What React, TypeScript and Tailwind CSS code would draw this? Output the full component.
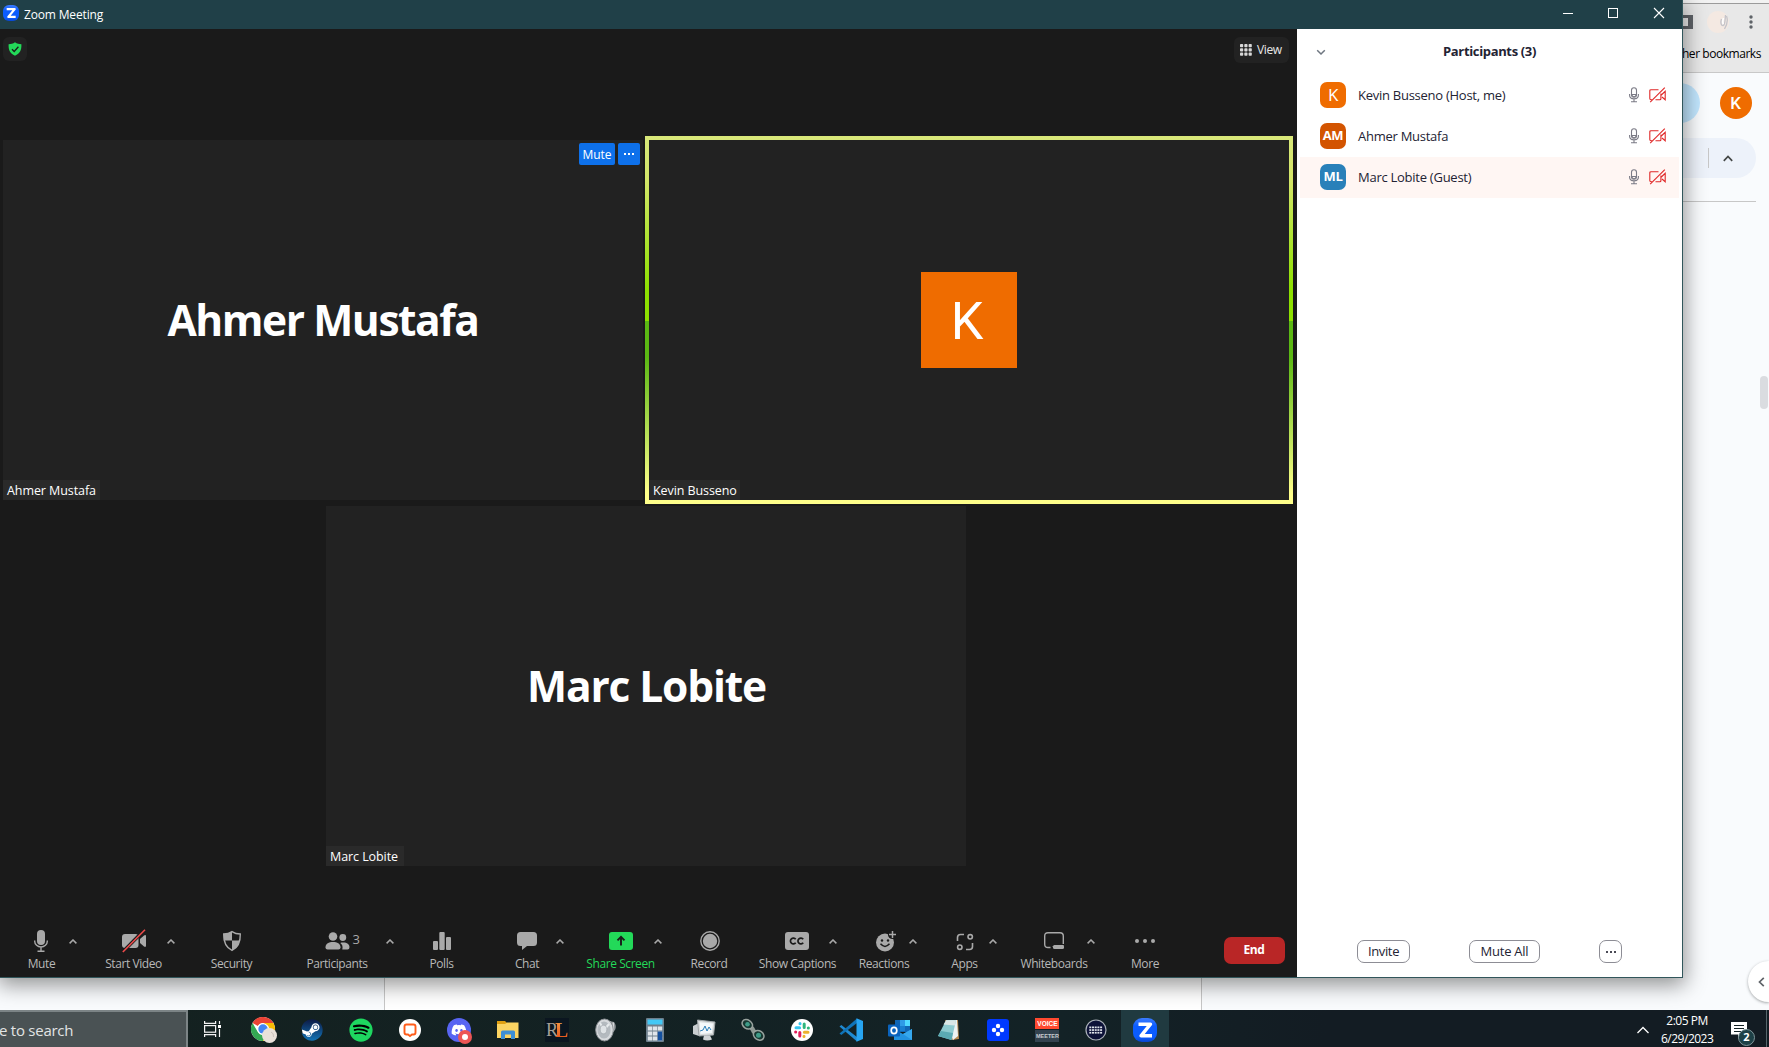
import React from "react";
import { FaSpotify, FaSteam, FaDiscord } from "react-icons/fa";

const G = "#a9a9a9";

/* ---------- meeting toolbar icons ---------- */

const MicIcon = () => (
  <svg width="16" height="24" viewBox="0 0 16 24" fill="none" stroke={G} strokeWidth="1.400" className="mr-px">
    <rect x="4" y="1" width="8" height="15" rx="4" fill={G} stroke="none" />
    <path d="M1.700 11.500v.8a6.300 5.700 0 0 0 12.600 0v-.8M8 18v4M4.500 22.200h7" />
  </svg>
);
const VideoOffIcon = () => (
  <svg width="26" height="24" viewBox="0 0 26 24">
    <rect x="1" y="5" width="16.500" height="14" rx="3" fill={G} />
    <path d="M19 10l4-3.600q2-1 2 .8v9.600q0 1.800-2 .8l-4-3.600z" fill={G} />
    <path d="M1.500 23.200L23.500.8" stroke="#1a1a1a" strokeWidth="3.400" />
    <path d="M1.800 23L24 .8" stroke="#ef4b4b" strokeWidth="1.600" />
  </svg>
);
const SecurityIcon = () => (
  <svg width="20" height="22" viewBox="0 0 20 22">
    <path d="M10 1.600C7.500 3.300 4.500 4 1.700 4c-.2 7.500 1.800 13.300 8.300 16.400C16.500 17.300 18.500 11.500 18.300 4 15.500 4 12.500 3.300 10 1.600z" fill="none" stroke={G} strokeWidth="1.400" />
    <path d="M10 1.600C7.500 3.300 4.500 4 1.700 4c0 2.500.1 4.600.6 6.500H10zM10 10.500h7.700c-.9 4.500-3.200 7.900-7.700 9.900z" fill={G} />
  </svg>
);
const PeopleIcon = () => (
  <svg width="26" height="20" viewBox="0 0 26 20" fill={G} className="mr-px">
    <circle cx="9" cy="5.500" r="4.300" />
    <path d="M1.500 16.500c0-4 3.300-5.500 7.500-5.500s7.500 1.500 7.500 5.500q0 2-2 2h-11q-2 0-2-2z" />
    <circle cx="18.800" cy="6.500" r="3.400" />
    <path d="M17.500 11.600c4.700-.6 8 1 8 4.700q0 2.200-2 2.200h-5.200c.8-3-.1-5.200-2-6.500z" />
  </svg>
);
const PollsIcon = () => (
  <svg width="18" height="18" viewBox="0 0 18 18" fill={G}>
    <rect x="0" y="9" width="5" height="9" rx="1" />
    <rect x="6.300" y="0" width="5.400" height="18" rx="1" />
    <rect x="13" y="5" width="5" height="13" rx="1" />
  </svg>
);
const ChatIcon = () => (
  <svg width="20" height="18" viewBox="0 0 20 18" fill={G}>
    <path d="M3.500 0h13Q20 0 20 3.500v7q0 3.500-3.500 3.500H10l-5 4v-4H3.500Q0 14 0 10.500v-7Q0 0 3.500 0z" />
  </svg>
);
const ShareIcon = () => (
  <svg width="24" height="18" viewBox="0 0 24 18">
    <rect width="24" height="18" rx="3" fill="#23d959" />
    <path d="M12 13.500V5M8.500 8.300L12 4.800l3.500 3.500" fill="none" stroke="#1a1a1a" strokeWidth="1.900" />
  </svg>
);
const RecordIcon = () => (
  <svg width="20" height="20" viewBox="0 0 20 20" className="ml-[2px]">
    <circle cx="10" cy="10" r="9.200" fill="none" stroke={G} strokeWidth="1.400" />
    <circle cx="10" cy="10" r="7.200" fill={G} />
  </svg>
);
const CaptionsIcon = () => (
  <svg width="24" height="18" viewBox="0 0 24 18" className="mr-px">
    <rect width="24" height="18" rx="3" fill={G} />
    <path d="M10.700 7.300a2.900 2.900 0 1 0 0 3.400M18.200 7.300a2.900 2.900 0 1 0 0 3.400" fill="none" stroke="#1a1a1a" strokeWidth="1.700" />
  </svg>
);
const ReactionsIcon = () => (
  <svg width="22" height="22" viewBox="0 0 22 22" className="ml-[3px]">
    <circle cx="10" cy="12.500" r="9" fill={G} />
    <circle cx="17.500" cy="4.500" r="4.600" fill="#1a1a1a" />
    <path d="M17.500 1v7M14 4.500h7" stroke={G} strokeWidth="1.500" />
    <circle cx="7" cy="10.500" r="1.200" fill="#1a1a1a" />
    <circle cx="13" cy="10.500" r="1.200" fill="#1a1a1a" />
    <path d="M5.500 13.800q4.500 5.200 9 0" fill="none" stroke="#1a1a1a" strokeWidth="1.500" />
  </svg>
);
const AppsIcon = () => (
  <svg width="18" height="18" viewBox="0 0 18 18" fill="none" stroke={G} strokeWidth="1.600" className="mt-[2px]">
    <path d="M1.500 8V4.500q0-3 3-3H8M16.500 10v3.500q0 3-3 3H10" />
    <circle cx="14.200" cy="3.800" r="2.200" />
    <circle cx="3.800" cy="14.200" r="2.200" />
  </svg>
);
const WhiteboardIcon = () => (
  <svg width="20" height="18" viewBox="0 0 20 18">
    <path d="M6.500 15.500H4Q.7 15.500.7 12.300V4Q.7.700 4 .700h12Q19.300.700 19.300 4v8" fill="none" stroke={G} strokeWidth="1.400" />
    <path d="M11.500 13H19.500v3H11.500L8 14.800z" fill={G} />
    <rect x="9" y="13" width="11" height="4" rx="1.500" fill={G} />
  </svg>
);
const MoreIcon = () => (
  <svg width="20" height="4" viewBox="0 0 20 4" fill={G}>
    <circle cx="2" cy="2" r="2" />
    <circle cx="10" cy="2" r="2" />
    <circle cx="18" cy="2" r="2" />
  </svg>
);
const Caret = () => (
  <svg width="8" height="5" viewBox="0 0 8 5" fill="none" stroke={G} strokeWidth="1.500">
    <path d="M.6 4.400L4 1l3.400 3.400" />
  </svg>
);

type Tool = { label: string; icon: React.ReactNode; box: string; caret?: boolean; green?: boolean; count?: string };

const tools: Tool[] = [
  { label: "Mute", icon: <MicIcon />, box: "ml-[18px] w-[47px]", caret: true },
  { label: "Start Video", icon: <VideoOffIcon />, box: "ml-[23px] w-[59px]", caret: true },
  { label: "Security", icon: <SecurityIcon />, box: "ml-[30px] w-[45px]" },
  { label: "Participants", icon: <PeopleIcon />, box: "ml-[38px] w-[90px]", caret: true, count: "3" },
  { label: "Polls", icon: <PollsIcon />, box: "ml-[30px] w-[27px]" },
  { label: "Chat", icon: <ChatIcon />, box: "ml-[47px] w-[50px]", caret: true },
  { label: "Share Screen", icon: <ShareIcon />, box: "ml-[23px] w-[59px]", caret: true, green: true },
  { label: "Record", icon: <RecordIcon />, box: "ml-[24px] w-[38px]" },
  { label: "Show Captions", icon: <CaptionsIcon />, box: "ml-[42px] w-[55px]", caret: true },
  { label: "Reactions", icon: <ReactionsIcon />, box: "ml-[22px] w-[42px]", caret: true },
  { label: "Apps", icon: <AppsIcon />, box: "ml-[23px] w-[41px]", caret: true },
  { label: "Whiteboards", icon: <WhiteboardIcon />, box: "ml-[24px] w-[58px]", caret: true },
  { label: "More", icon: <MoreIcon />, box: "ml-[31px] w-[30px]" },
];

function ToolButton({ t }: { t: Tool }) {
  return (
    <div className="flex shrink-0">
      <div className={`flex flex-col items-center ${t.box}`}>
        <div className="relative flex h-[26px] items-center justify-center">
          {t.icon}
          {t.count && <span className="absolute top-[2px] left-[29px] text-[13px] leading-[18px] text-[#a9a9a9]">{t.count}</span>}
        </div>
        <span className={`mt-px text-[12px] leading-[18px] font-medium tracking-[-0.42px] whitespace-nowrap ${t.green ? "text-[#23d959]" : "text-[#b8b8b8]"}`}>{t.label}</span>
      </div>
      {t.caret && (
        <div className="flex h-[26px] w-4 items-center justify-center">
          <Caret />
        </div>
      )}
    </div>
  );
}

function NameTag({ name, width }: { name: string; width: string }) {
  return <div className={`flex h-5 items-center self-start bg-[#2a2a2a] pt-[2px] pl-1 text-[12.5px] leading-5 tracking-[-0.08px] whitespace-nowrap text-white ${width}`}>{name}</div>;
}

/* ---------- participants panel ---------- */

const people = [
  { initials: "K", name: "Kevin Busseno (Host, me)", bg: "bg-[#ef6c00]", font: "text-[17px] font-normal", row: "" },
  { initials: "AM", name: "Ahmer Mustafa", bg: "bg-[#d35400]", font: "text-[13px] font-bold", row: "" },
  { initials: "ML", name: "Marc Lobite (Guest)", bg: "bg-[#2980b9]", font: "text-[13px] font-bold", row: "bg-[#fff6f3]" },
];

const SmallMic = () => (
  <svg width="10" height="16" viewBox="0 0 10 16" fill="none" stroke="#7b7b86" strokeWidth="1.100">
    <rect x="2.500" y=".8" width="5" height="9.400" rx="2.500" />
    <path d="M3 7.500h4v1q-2 2.500-4 0zM.6 7v1.200q0 3.600 4.400 3.600t4.400-3.600V7M5 12v2.600M2 14.800h6" />
  </svg>
);
const SmallVideoOff = () => (
  <svg width="17" height="16" viewBox="0 0 17 16" fill="none" stroke="#e02828" strokeWidth="1.100">
    <path d="M9.500 2.700H2q-1.200 0-1.200 1.200v7.700q0 1.200 1.200 1.200h1M6.500 12.800h4.400q1 0 1-1V6.500M12.300 8l3.900-3.700v8.400L13 10" />
    <path d="M1.200 15.200L15.800.6" />
  </svg>
);

function ParticipantsPanel() {
  return (
    <section className="flex w-[385px] flex-col bg-white text-[#232333]">
      <header className="flex h-[46px] items-center pl-[19px]">
        <svg width="10" height="7" viewBox="0 0 10 7" fill="none" stroke="#6e7680" strokeWidth="1.500">
          <path d="M1.200 1.200L5 5l3.800-3.800" />
        </svg>
        <h1 className="flex-1 pr-[29px] pb-[1px] text-center text-[13px] font-bold tracking-[-0.35px]">Participants (3)</h1>
      </header>
      <ul className="px-[3px]">
        {people.map((p) => (
          <li key={p.name} className={`flex h-[41px] items-center pr-[13px] pb-px pl-5 ${p.row}`}>
            <span className={`flex size-[26px] items-center justify-center rounded-[7px] tracking-[-0.3px] text-white ${p.bg} ${p.font}`}>{p.initials}</span>
            <span className="ml-3 flex-1 pt-px text-[13px] tracking-[-0.26px]">{p.name}</span>
            <SmallMic />
            <span className="ml-[10px]">
              <SmallVideoOff />
            </span>
          </li>
        ))}
      </ul>
      <footer className="mt-auto mb-[14px] flex pl-[60px] text-[13px] leading-[21px]">
        <button className="h-[23px] w-[53px] rounded-[7px] border border-[#8d8d95] tracking-[-0.35px]">Invite</button>
        <button className="ml-[59px] h-[23px] w-[71px] rounded-[7px] border border-[#8d8d95] tracking-[-0.25px]">Mute All</button>
        <button className="ml-[59px] flex h-[23px] w-[23px] items-center justify-center gap-[2px] rounded-[7px] border border-[#8d8d95]">
          <i className="size-[2px] bg-[#4a4a55]" />
          <i className="size-[2px] bg-[#4a4a55]" />
          <i className="size-[2px] bg-[#4a4a55]" />
        </button>
      </footer>
    </section>
  );
}

const ZoomLogo = ({ size }: { size: number }) => (
  <svg width={size} height={size} viewBox="0 0 24 24">
    <defs>
      <linearGradient id="zl" x1="0" y1="0" x2="0" y2="1">
        <stop offset="0" stopColor="#3b7cff" />
        <stop offset=".35" stopColor="#0b5cff" />
        <stop offset=".8" stopColor="#0b5cff" />
        <stop offset="1" stopColor="#0846d0" />
      </linearGradient>
    </defs>
    <rect width="24" height="24" rx="9" fill="url(#zl)" />
    <path d="M5.500 6.200h12L8 17.800h11" fill="none" stroke="#fff" strokeWidth="3.400" strokeLinejoin="round" />
  </svg>
);

function MeetingWindow() {
  return (
    <div className="absolute top-0 left-0 flex h-[978px] w-[1683px] flex-col border-r border-b border-[#31565b] bg-[#1a1a1a] shadow-[0_5px_20px_2px_rgba(0,0,0,0.42)]">
      <div className="flex h-[29px] shrink-0 items-center bg-[#204048] pl-[3px] text-white">
        <div className="mb-[3px]">
          <ZoomLogo size={16} />
        </div>
        <span className="ml-[5px] flex-1 pt-px text-[12px] leading-4 tracking-[-0.16px]">Zoom Meeting</span>
        <svg className="mb-[3px] mr-[17px]" width="102" height="12" viewBox="0 0 102 12" fill="none" stroke="#fff">
          <path d="M0 6.500h10" />
          <rect x="45.500" y="1.500" width="9" height="9" />
          <path d="M91 1l10 10M101 1L91 11" strokeWidth="1.100" />
        </svg>
      </div>
      <div className="flex min-h-0 flex-1">
        <main className="flex w-[1297px] flex-col bg-[#1a1a1a]">
          <div className="flex h-[107px] items-start justify-between pt-2 pr-2 pl-[3px]">
            <div className="flex size-6 items-center justify-center rounded-[6px] bg-[#222]">
              <svg width="14" height="14" viewBox="0 0 14 14">
                <path d="M7 .3C5 1.800 3 2.200.6 2.300.400 8 1.800 11.500 7 13.800 12.200 11.500 13.600 8 13.400 2.300 11 2.200 9 1.800 7 .3z" fill="#23d959" />
                <path d="M4 7.300l2.200 2.200 4.200-4.700" fill="none" stroke="#1a1a1a" strokeWidth="1.300" />
              </svg>
            </div>
            <div className="flex h-[26px] w-[55px] items-center gap-[5px] rounded-[6px] bg-[#222] pb-px pl-[6px] text-[12px] tracking-[-0.4px] text-[#e8e8e8]">
              <svg width="12" height="12" viewBox="0 0 12 12" fill="#d8d8d8" className="shrink-0">
                {[0, 4.300, 8.600].map((y) => [0, 4.300, 8.600].map((x) => <rect key={`${x}-${y}`} x={x} y={y} width="3.200" height="3.200" rx=".8" />))}
              </svg>
              View
            </div>
          </div>
          <div className="flex pl-[3px]">
            <div className="mt-1 flex h-[360px] w-[640px] flex-col bg-[#222]">
              <div className="flex h-0 justify-end gap-[3px] pr-[3px]">
                <button className="mt-[3px] h-[22px] w-9 shrink-0 rounded-[2px] bg-[#0e71eb] text-[12px] leading-[21px] text-white">Mute</button>
                <button className="mt-[3px] flex h-[22px] w-[22px] shrink-0 items-center justify-center gap-[2px] rounded-[2px] bg-[#0e71eb]">
                  <i className="size-[2px] bg-white" />
                  <i className="size-[2px] bg-white" />
                  <i className="size-[2px] bg-white" />
                </button>
              </div>
              <div className="flex flex-1 items-center justify-center pt-[19px] text-[42.5px] font-bold tracking-[-1.430px] text-white">Ahmer Mustafa</div>
              <NameTag name="Ahmer Mustafa" width="w-[97px]" />
            </div>
            <div className="ml-[2px] h-[368px] w-[648px] bg-[linear-gradient(180deg,#d9e87a_0%,#d3e668_12%,#8de000_42%,#8de000_50.200%,#5bb813_50.400%,#5bb813_60%,#ffff8a_97%,#ffff8a_100%)] p-1">
              <div className="flex h-full flex-col bg-[#222]">
                <div className="flex flex-1 items-center justify-center pt-5">
                  <div className="flex size-24 items-center justify-center bg-[#ef6c00] pt-[3px] pr-[4px] font-[Roboto] text-[52px] text-white">K</div>
                </div>
                <NameTag name="Kevin Busseno" width="w-[91px]" />
              </div>
            </div>
          </div>
          <div className="mt-[2px] ml-[326px] flex h-[360px] w-[640px] flex-col bg-[#222]">
            <div className="flex flex-1 items-center justify-center pt-[19px] pl-px text-[42.5px] font-bold tracking-[-1.150px] text-white">Marc Lobite</div>
            <NameTag name="Marc Lobite" width="w-[78px]" />
          </div>
          <div className="mt-auto flex h-[49px]">
            {tools.map((t) => (
              <ToolButton key={t.label} t={t} />
            ))}
            <button className="mt-[9px] ml-[64px] h-[27px] w-[61px] rounded-[7px] bg-[#b92626] pr-px pb-[2px] text-[12px] font-bold tracking-[-0.4px] text-white">End</button>
          </div>
        </main>
        <ParticipantsPanel />
      </div>
    </div>
  );
}

/* ---------- browser page behind the meeting ---------- */

function BrowserPage() {
  return (
    <div className="flex h-[1010px] flex-col bg-[#f9fbfd]">
      <div className="h-1 border-b border-[#9b9b9b] bg-[#f2f2f2]" />
      <div className="h-[69px] border-b border-[#c8c8c8] bg-[#e8e8e8]">
        <div className="flex h-[36px] items-center justify-end pr-[16px]">
          <div className="mr-[14px] h-[14px] w-[18px] border-[3px] border-r-[5px] border-[#5f6368] bg-[#ececec]" />
          <svg width="22" height="22" viewBox="0 0 22 22" className="mr-[20px]">
            <circle cx="11" cy="11" r="11" fill="#f4e9e2" />
            <path d="M14.500 8c-1.500 4 0 7 1.800 6.500 2-1 1.700-6 2.200-10.500M19.500 5c1.500 4 .5 9-2 13" stroke="#c4c4ca" strokeWidth="1.300" fill="none" />
            <path d="M16.500 7c-1 3-1 5 0 6" stroke="#fff" strokeWidth="1.600" fill="none" />
          </svg>
          <svg width="4" height="14" viewBox="0 0 4 14" fill="#5f6368">
            <circle cx="2" cy="2" r="1.700" />
            <circle cx="2" cy="7" r="1.700" />
            <circle cx="2" cy="12" r="1.700" />
          </svg>
        </div>
        <div className="pr-[8px] text-right text-[12px] leading-[28px] tracking-[-0.45px] text-black">Other bookmarks</div>
      </div>
      <div className="mt-[10px] flex h-10 items-center justify-end pr-[17px]">
        <div className="h-10 w-[110px] rounded-full bg-[#c2e7ff]" />
        <div className="ml-5 flex size-8 items-center justify-center rounded-full bg-[#ef6c00] pt-px pr-px font-[Roboto] text-[17px] font-medium text-white">K</div>
      </div>
      <div className="mt-[15px] mr-[13px] flex h-10 items-center justify-end rounded-full bg-[#edf2fa] pr-[23px]">
        <div className="mr-[14px] h-5 w-px bg-[#c7c7c7]" />
        <svg width="10" height="7" viewBox="0 0 10 7" fill="none" stroke="#444746" strokeWidth="1.700">
          <path d="M.8 5.800L5 1.500l4.200 4.300" />
        </svg>
      </div>
      <div className="mt-[23px] mr-[13px] h-px bg-[#c7c7c7]" />
      <div className="mt-[174px] mr-[1px] h-[33px] w-2 self-end rounded-full bg-[#dadce0]" />
      <div className="flex flex-1 items-end">
        <div className="ml-[384px] h-[400px] w-[818px] border-x border-[#c7c7c7] bg-white" />
        <div className="mb-[8px] ml-auto flex h-[41px] w-[21px] items-center justify-end rounded-l-full bg-white pr-[4px] shadow-[0_1px_3px_rgba(60,64,67,0.45)]">
          <svg width="7" height="10" viewBox="0 0 7 10" fill="none" stroke="#5f6368" strokeWidth="1.700">
            <path d="M5.800.8L1.500 5l4.300 4.200" />
          </svg>
        </div>
      </div>
    </div>
  );
}

/* ---------- Windows taskbar ---------- */

const apps: { id: string; icon: React.ReactNode }[] = [
  {
    id: "chrome",
    icon: (
      <svg width="26" height="26" viewBox="0 0 26 26" className="ml-px">
        <circle cx="12" cy="12" r="12" fill="#fff" />
        <path d="M1.600 6A12 12 0 0 1 22.400 6H12a6 6 0 0 0-5.200 3z" fill="#ea4335" />
        <path d="M1.600 6a12 12 0 0 0 10.400 18l5.200-9A6 6 0 0 1 6.800 15z" fill="#34a853" />
        <path d="M22.400 6A12 12 0 0 1 12 24l5.200-9A6 6 0 0 0 17.200 9L12 6z" fill="#fbbc04" />
        <circle cx="12" cy="12" r="5.800" fill="#fff" />
        <circle cx="12" cy="12" r="4.700" fill="#4285f4" />
        <circle cx="18.500" cy="18.500" r="7.500" fill="#e9e1da" />
        <path d="M20 15q3 1 2.500 5" stroke="#cbc2bd" fill="none" />
      </svg>
    ),
  },
  {
    id: "steam",
    icon: (
      <div className="flex size-[20px] items-center justify-center rounded-full bg-white">
        <svg width="0" height="0">
          <linearGradient id="stm" x1="0" y1="0" x2="0" y2="1">
            <stop offset="0" stopColor="#0d1a45" />
            <stop offset="1" stopColor="#1273b5" />
          </linearGradient>
        </svg>
        <FaSteam size={22} className="shrink-0" style={{ fill: "url(#stm)" }} />
      </div>
    ),
  },
  {
    id: "spotify",
    icon: (
      <div className="flex size-[22px] items-center justify-center rounded-full bg-black">
        <FaSpotify size={24} className="shrink-0 text-[#1ed760]" />
      </div>
    ),
  },
  {
    id: "chat-agent",
    icon: (
      <svg width="22" height="22" viewBox="0 0 22 22">
        <circle cx="11" cy="11" r="11" fill="#fff" />
        <path d="M7.500 5.500h7q2 0 2 2v6q0 2-2 2H13l-2 1.500-2-1.500H7.500q-2 0-2-2v-6q0-2 2-2z" fill="none" stroke="#ff5c1a" strokeWidth="1.900" />
      </svg>
    ),
  },
  {
    id: "discord",
    icon: (
      <div className="relative flex size-6 items-center justify-center rounded-full bg-[#5865f2]">
        <FaDiscord size={16} className="text-white" />
        <span className="absolute -right-px -bottom-[2px] flex size-[14px] items-center justify-center rounded-full bg-[#ed5555]">
          <i className="size-[6px] rounded-full bg-white" />
        </span>
      </div>
    ),
  },
  {
    id: "explorer",
    icon: (
      <svg width="22" height="20" viewBox="0 0 22 20">
        <path d="M0 1h8l2 2v4H0z" fill="#e0a011" />
        <path d="M0 4h8l2-1.500h11.500V18H0z" fill="#fcd462" />
        <path d="M4 19v-7q0-1.500 1.500-1.500h11Q18 10.500 18 12v7h-4v-4.500H8V19z" fill="#3d8fd6" />
      </svg>
    ),
  },
  {
    id: "rl",
    icon: (
      <div className="flex h-6 w-6 items-center justify-center bg-[#0b1620] font-['Liberation_Serif'] text-[18px] leading-6 tracking-[-3px]">
        <span className="text-[#a59f97]">R</span>
        <span className="bg-linear-to-b from-[#f5a04a] to-[#e4430c] bg-clip-text pr-[3px] text-[20px] font-bold text-transparent">L</span>
      </div>
    ),
  },
  {
    id: "speaker",
    icon: (
      <svg width="22" height="24" viewBox="0 0 22 24">
        <path d="M10 2l9 2q3 4 1 8l-9 9z" fill="#8f9498" />
        <path d="M15 3.500v12M18.300 4.500v9" stroke="#d5d8da" strokeWidth="1.500" />
        <ellipse cx="9.500" cy="12" rx="8.800" ry="11" fill="#d7dadd" stroke="#8a8f93" />
        <ellipse cx="9" cy="12" rx="6.600" ry="8.600" fill="#b4babf" />
        <path d="M9 12L5 5M9 12l5-6" stroke="#e6eaec" strokeWidth="2" />
        <ellipse cx="8.500" cy="11.500" rx="3.300" ry="4.300" fill="#dfe3e6" stroke="#9aa1a6" strokeWidth=".6" />
      </svg>
    ),
  },
  {
    id: "calculator",
    icon: (
      <svg width="18" height="24" viewBox="0 0 18 24">
        <rect width="18" height="24" rx="1" fill="#6d7f8c" />
        <rect x="1.500" y="1.500" width="15" height="5" fill="#42c8f5" />
        {[8.500, 13.500, 18.500].map((y) => [1.800, 6.800, 11.800].map((x) => <rect key={`${x}-${y}`} x={x} y={y} width="4.400" height="4" fill="#dfe5ea" />))}
        <rect x="11.800" y="13.500" width="4.400" height="9" fill="#14509e" />
      </svg>
    ),
  },
  {
    id: "monitor",
    icon: (
      <svg width="24" height="22" viewBox="0 0 24 22">
        <path d="M1 7l6-3v13l-6-2z" fill="#c9ced0" />
        <path d="M5.500 1l17.500 2-1.500 13L7 17z" fill="#d9dcdc" stroke="#9fa5a8" />
        <path d="M7.500 3.200l13.500 1.300-1.200 9.500L8.500 15z" fill="#f4f8fa" />
        <path d="M8 12l3-1 2-4 2 5 2-4 2 3" fill="none" stroke="#2c7fb8" />
        <path d="M12 16.500h6l2 4q-5 2-9 0z" fill="#d0d4d6" />
      </svg>
    ),
  },
  {
    id: "link",
    icon: (
      <svg width="24" height="24" viewBox="0 0 24 24">
        <path d="M6 7q5 2 6 5t7 6" stroke="#8f9994" strokeWidth="4.500" fill="none" />
        <g stroke="#9aa39f" strokeWidth="1.500">
          <ellipse cx="6.300" cy="6.300" rx="5.600" ry="4.300" transform="rotate(35 6.300 6.300)" fill="#173832" />
          <ellipse cx="17.700" cy="17.300" rx="5.600" ry="4.500" transform="rotate(35 17.700 17.300)" fill="#173832" />
        </g>
        <circle cx="6.500" cy="6.300" r="2.300" fill="#3f9c88" />
        <circle cx="17.500" cy="17.300" r="2.500" fill="#3f9c88" />
      </svg>
    ),
  },
  {
    id: "slack",
    icon: (
      <svg width="22" height="22" viewBox="0 0 22 22" strokeWidth="3" strokeLinecap="round">
        <circle cx="11" cy="11" r="11" fill="#fff" />
        <path d="M5 8.800h3.600M9 4.600v.1" stroke="#36c5f0" />
        <path d="M13.200 5v3.600M17.400 9h-.1" stroke="#2eb67d" />
        <path d="M17 13.200h-3.600M13 17.400v-.1" stroke="#ecb22e" />
        <path d="M8.800 17v-3.600M4.600 13h.1" stroke="#e01e5a" />
      </svg>
    ),
  },
  {
    id: "vscode",
    icon: (
      <svg width="24" height="24" viewBox="0 0 24 24">
        <path d="M.5 8.500L2.300 7 18 19v4.500z" fill="#1f8ad2" />
        <path d="M.5 15.500L2.300 17 18 5V.5z" fill="#0f73b8" />
        <path d="M17.500.300L24 3v18l-6.500 2.700z" fill="#27a5f2" />
      </svg>
    ),
  },
  {
    id: "outlook",
    icon: (
      <svg width="24" height="22" viewBox="0 0 24 22">
        <path d="M7 1h15v12H7z" fill="#1066b5" />
        <path d="M12 1h5v6h-5z" fill="#2f9be6" />
        <path d="M17 1h5v6h-5z" fill="#50d9ff" />
        <path d="M12 7h5v5h-5z" fill="#1a7fd0" />
        <path d="M6 10l9 5 9-5v11H6z" fill="#2292e0" />
        <path d="M15 15l9-5v11z" fill="#36a8ee" />
        <rect x="0" y="5.500" width="12" height="12" rx="1" fill="#0a63bd" />
        <ellipse cx="6" cy="11.500" rx="2.800" ry="3.200" fill="none" stroke="#fff" strokeWidth="1.700" />
      </svg>
    ),
  },
  {
    id: "notepad",
    icon: (
      <svg width="24" height="22" viewBox="0 0 24 22">
        <path d="M8 1h13l1 19-7 1z" fill="#b88a50" />
        <path d="M9 1h11l1 16-5 4z" fill="#eef3f3" />
        <path d="M9 1.500h10L14.500 21 1 17z" fill="#8ecbd0" />
        <path d="M9 1.500h10l-1.200 5L6.500 5.500z" fill="#dbe7e6" />
        <path d="M4 12l12 2-1.500 7L1 17z" fill="#5baab3" />
      </svg>
    ),
  },
  {
    id: "blue-dots",
    icon: (
      <svg width="22" height="22" viewBox="0 0 22 22">
        <rect width="22" height="22" rx="3" fill="#0039ff" />
        <g fill="#fff">
          <circle cx="11" cy="7" r="2.200" />
          <circle cx="7" cy="11" r="2.200" />
          <circle cx="15" cy="11" r="2.200" />
          <circle cx="11" cy="15" r="2.200" />
        </g>
      </svg>
    ),
  },
  {
    id: "voicemeeter",
    icon: (
      <div className="ml-[2px] flex h-6 w-6 flex-col text-center font-['Liberation_Sans'] text-[6.5px] leading-[12px] font-bold text-white">
        <span className="h-[11px] bg-[#ff4a30]">VOICE</span>
        <span className="mt-px flex h-3 justify-center bg-[#33424f] text-[5.500px] text-[#c8ccd0]">MEETER</span>
      </div>
    ),
  },
  {
    id: "keyboard",
    icon: (
      <svg width="22" height="22" viewBox="0 0 22 22" className="ml-[2px]">
        <circle cx="11" cy="11" r="10" fill="#0d1238" stroke="#aab0b8" strokeWidth="1.200" />
        {[7.500, 10.200, 12.900].map((y) => [4.300, 7, 9.700, 12.400, 15.100].map((x) => <rect key={`${x}-${y}`} x={x} y={y} width="2" height="1.700" fill="#dfe3ea" />))}
      </svg>
    ),
  },
];

function Taskbar() {
  return (
    <div className="flex h-[37px] overflow-hidden bg-[linear-gradient(90deg,#14211f_0%,#132226_60%,#131c23_75%,#131c23_100%)] text-white">
      <div className="flex w-[188px] shrink-0 items-center overflow-hidden border-t-2 border-r-2 border-[#7c8486] bg-[#4a5254] pt-px text-[15px] tracking-[-0.25px] whitespace-nowrap text-[#e2e4e4]">
        <span className="-ml-px">e to search</span>
      </div>
      <div className="flex w-[51px] shrink-0 items-center pb-px pl-4">
        <svg width="17" height="16" viewBox="0 0 17 16" fill="none" stroke="#f4f4f4" strokeWidth="1.200" className="mt-[2px]">
          <path d="M.6 0v2.400h11V0M.6 16v-2.400h11V16M15.500 0v3M15.500 8v8" />
          <rect x=".6" y="4.600" width="11" height="6.600" />
          <rect x="14" y="4" width="3" height="3" fill="#fff" stroke="none" />
        </svg>
      </div>
      {apps.map((a) => (
        <div key={a.id} className="flex w-[48.95px] shrink-0 items-center justify-center pt-[3px]">
          {a.icon}
        </div>
      ))}
      <div className="ml-[1px] flex w-12 shrink-0 items-center justify-center bg-[#203a40] pt-[3px]">
        <ZoomLogo size={24} />
      </div>
      <div className="ml-auto flex items-center">
        <svg width="12" height="8" viewBox="0 0 12 8" className="mt-[3px] mr-[12px]" fill="none" stroke="#fff" strokeWidth="1.300">
          <path d="M.5 7L6 1.500 11.500 7" />
        </svg>
        <div className="mt-[3px] w-[52px] text-center text-[12px] leading-[18px] tracking-[-0.5px] whitespace-nowrap">
          <div>2:05 PM</div>
          <div>6/29/2023</div>
        </div>
        <div className="relative mr-[2px] ml-[18px] h-[37px] w-[36px] border-r border-[#56666b]">
          <svg width="25" height="25" viewBox="0 0 25 25" className="mt-3">
            <path d="M0 0h16v12.500h-5L7 17v-4.500H0z" fill="#fff" />
            <path d="M3 3.500h10M3 6.500h10M3 9.500h7" stroke="#132226" />
          </svg>
          <span className="absolute top-[19px] left-[7px] flex size-[17px] items-center justify-center rounded-full border border-[#7f9599] bg-[#1d4046] text-[11px] font-bold">2</span>
        </div>
      </div>
    </div>
  );
}

export default function App() {
  return (
    <div className="relative h-[1047px] w-[1769px] overflow-hidden font-['Open_Sans','Noto_Sans',sans-serif]">
      <BrowserPage />
      <MeetingWindow />
      <div className="relative">
        <Taskbar />
      </div>
    </div>
  );
}
